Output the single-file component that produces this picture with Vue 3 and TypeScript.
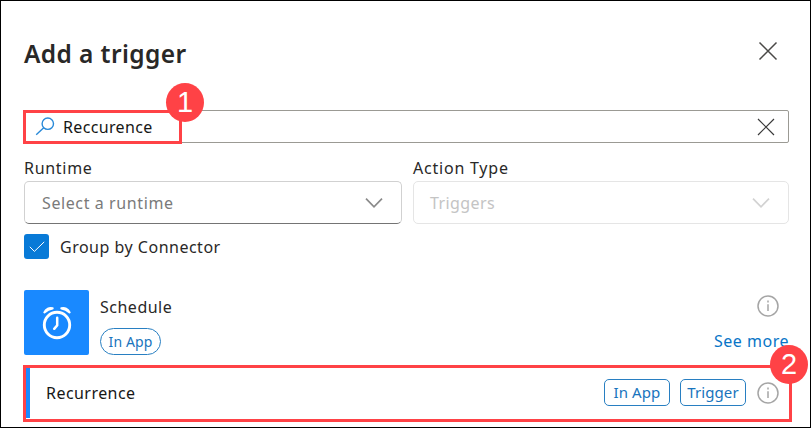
<script setup lang="ts">
import { ref } from 'vue'

const query = ref('Reccurence')
const grouped = ref(true)
const tags: string[] = ['In App', 'Trigger']
</script>

<template>
  <main class="panel">
    <header class="head">
      <h1>Add a trigger</h1>
      <svg class="close" width="20" height="20" viewBox="0 0 20 20"><path d="M1.5 1.5 18.5 18.5M18.5 1.5 1.5 18.5" /></svg>
    </header>

    <div class="search">
      <svg class="lens" width="20" height="20" viewBox="0 0 20 20"><circle cx="12.8" cy="6.7" r="5.7" /><path d="M8.7 10.8 1.2 17.8" /></svg>
      <span class="query">{{ query }}</span>
      <svg class="clear" width="18" height="18" viewBox="0 0 18 18"><path d="M1 1 17 17M17 1 1 17" /></svg>
      <div class="mark mark-search"><b class="badge">1</b></div>
    </div>

    <section class="filters">
      <div class="field">
        <label class="runtime">Runtime</label>
        <div class="select">
          <span>Select a runtime</span>
          <svg width="18" height="11" viewBox="0 0 18 11"><path d="M1 1.7 9 9.8 17 1.7" /></svg>
        </div>
      </div>
      <div class="field">
        <label class="action">Action Type</label>
        <div class="select disabled">
          <span>Triggers</span>
          <svg width="18" height="11" viewBox="0 0 18 11"><path d="M1 1.7 9 9.8 17 1.7" /></svg>
        </div>
      </div>
    </section>

    <div class="group">
      <span class="check">
        <svg v-if="grouped" width="16" height="12" viewBox="0 0 16 12"><path d="M.8 5.8 5.4 10.4 15.2 .9" /></svg>
      </span>
      <span>Group by Connector</span>
    </div>

    <section class="connector">
      <div class="logo">
        <svg width="30" height="34" viewBox="0 0 30 34">
          <circle cx="15" cy="19" r="12.7" />
          <path class="hand" d="M15.2 11.8v7.6l-3 3.4" />
          <path class="bell" d="M2.4 6.4C4 3 7.4 1.2 10.6 2.4 7.6 3 4.8 4.4 2.4 6.4ZM27.6 6.4C26 3 22.6 1.2 19.4 2.4 22.4 3 25.2 4.4 27.6 6.4Z" />
        </svg>
      </div>
      <div class="info-col">
        <span class="schedule">Schedule</span>
        <span class="pill round">In App</span>
      </div>
      <div class="side">
        <svg class="info" width="22" height="22" viewBox="0 0 22 22"><circle cx="11" cy="11" r="10" /><path d="M11 9.3v6.8M11 5.6v2" /></svg>
        <a class="more">See more</a>
      </div>
    </section>

    <section class="operation">
      <span class="recurrence">Recurrence</span>
      <span v-for="tag in tags" :key="tag" class="pill">{{ tag }}</span>
      <svg class="info" width="22" height="22" viewBox="0 0 22 22"><circle cx="11" cy="11" r="10" /><path d="M11 9.3v6.8M11 5.6v2" /></svg>
      <div class="mark mark-operation"><b class="badge">2</b></div>
    </section>
  </main>
</template>

<style>
body { margin: 0; background: #fff; }
</style>

<style scoped>
* { box-sizing: border-box; }
.panel {
  width: 811px;
  height: 428px;
  padding: 0 21px 0 23px;
  border: 1px solid #000;
  overflow: hidden;
  background: #fff;
  color: #292827;
  font: 16px/20px "Noto Sans", "Open Sans", sans-serif;
  letter-spacing: .5px;
  white-space: nowrap;
}
svg { display: block; flex: none; fill: none; stroke: currentColor; }
.head { display: flex; height: 109px; justify-content: space-between; padding: 40px 11px 0 0; }
h1 { margin: -1px 0 0; font-size: 24.5px; line-height: 28px; font-weight: 600; letter-spacing: .4px; }
.close { color: #4a4947; stroke-width: 1.5; }
.search {
  position: relative;
  display: flex;
  align-items: center;
  height: 33px;
  padding: 0 13px 0 10px;
  border: 1px solid #9b9a94;
  border-radius: 2px;
  color: #171716;
}
.lens { color: #2889d8; stroke-width: 1.4; }
.query { margin-left: 8px; flex: 1; letter-spacing: .35px; }
.clear { color: #3a3a3a; stroke-width: 1.2; }
.mark { position: absolute; border: 3px solid #ff4246; }
.mark-search { left: -2px; top: -1px; width: 159px; height: 34px; }
.badge {
  position: absolute;
  right: -25px;
  top: -30px;
  width: 38px;
  height: 39px;
  border-radius: 50%;
  background: #ff4246;
  color: #fff;
  font: 29px/39px "Liberation Sans", Arial, sans-serif;
  letter-spacing: 0;
  text-align: center;
}
.filters { display: grid; grid-template-columns: 378px 376px; gap: 11px; padding-top: 15px; }
label { display: block; height: 23px; }
.runtime { letter-spacing: .7px; }
.action { letter-spacing: .78px; }
.select {
  display: flex;
  align-items: center;
  justify-content: space-between;
  height: 43px;
  padding: 0 18px 0 17px;
  border: 1px solid #d1d1d1;
  border-bottom-color: #747474;
  border-radius: 5px;
  color: #7a7a7a;
  letter-spacing: .6px;
}
.select svg { color: #8a8a8a; stroke-width: 1.7; }
.select.disabled { border-color: #e5e5e5; color: #c4c4c4; padding-left: 16px; letter-spacing: .4px; }
.select.disabled svg { color: #d2d2d2; }
.group { display: flex; align-items: center; height: 25px; margin-top: 10px; gap: 11px; }
.check {
  display: flex;
  align-items: center;
  justify-content: center;
  width: 25px;
  height: 25px;
  border-radius: 3px;
  background: #087ad7;
  color: #fff;
}
.connector { display: flex; height: 65px; margin-top: 31px; }
.logo {
  display: flex;
  align-items: center;
  justify-content: center;
  width: 65px;
  height: 65px;
  border-radius: 2px;
  background: #1989ff;
  color: #fff;
}
.logo svg { stroke-width: 2.9; }
.logo .hand { stroke-width: 2.5; stroke-linecap: round; }
.logo .bell { fill: #fff; stroke-width: 2.2; stroke-linejoin: round; }
.info-col { display: flex; flex: 1; flex-direction: column; align-items: flex-start; justify-content: space-between; padding: 7px 0 0 11px; }
.pill {
  display: flex;
  align-items: center;
  justify-content: center;
  width: 66px;
  height: 27px;
  border: 1.4px solid #287fc2;
  border-radius: 5px;
  color: #1874bd;
  font-size: 15px;
  letter-spacing: .1px;
  padding-bottom: 1px;
}
.pill.round { width: 61px; border-radius: 14px; font-size: 14px; padding-bottom: 0; }
.side { display: flex; flex-direction: column; align-items: flex-end; padding-top: 5px; gap: 14px; }
.info { color: #a5a5a5; stroke-width: 1.5; }
.side .info { margin-right: 10px; }
.more { color: #0875c7; }
.operation {
  position: relative;
  display: flex;
  align-items: center;
  height: 51px;
  margin: 12px 0 0 2px;
  padding: 0 10px 0 16px;
  border-left: 4px solid #1989ff;
  color: #171716;
}
.recurrence { flex: 1; letter-spacing: .45px; }
.operation .pill + .pill { margin-left: 10px; }
.operation .info { margin-left: 11px; }
.mark-operation { left: -7px; top: -2px; width: 769px; height: 57px; }
.mark-operation .badge { right: -19px; top: -23px; }
</style>
